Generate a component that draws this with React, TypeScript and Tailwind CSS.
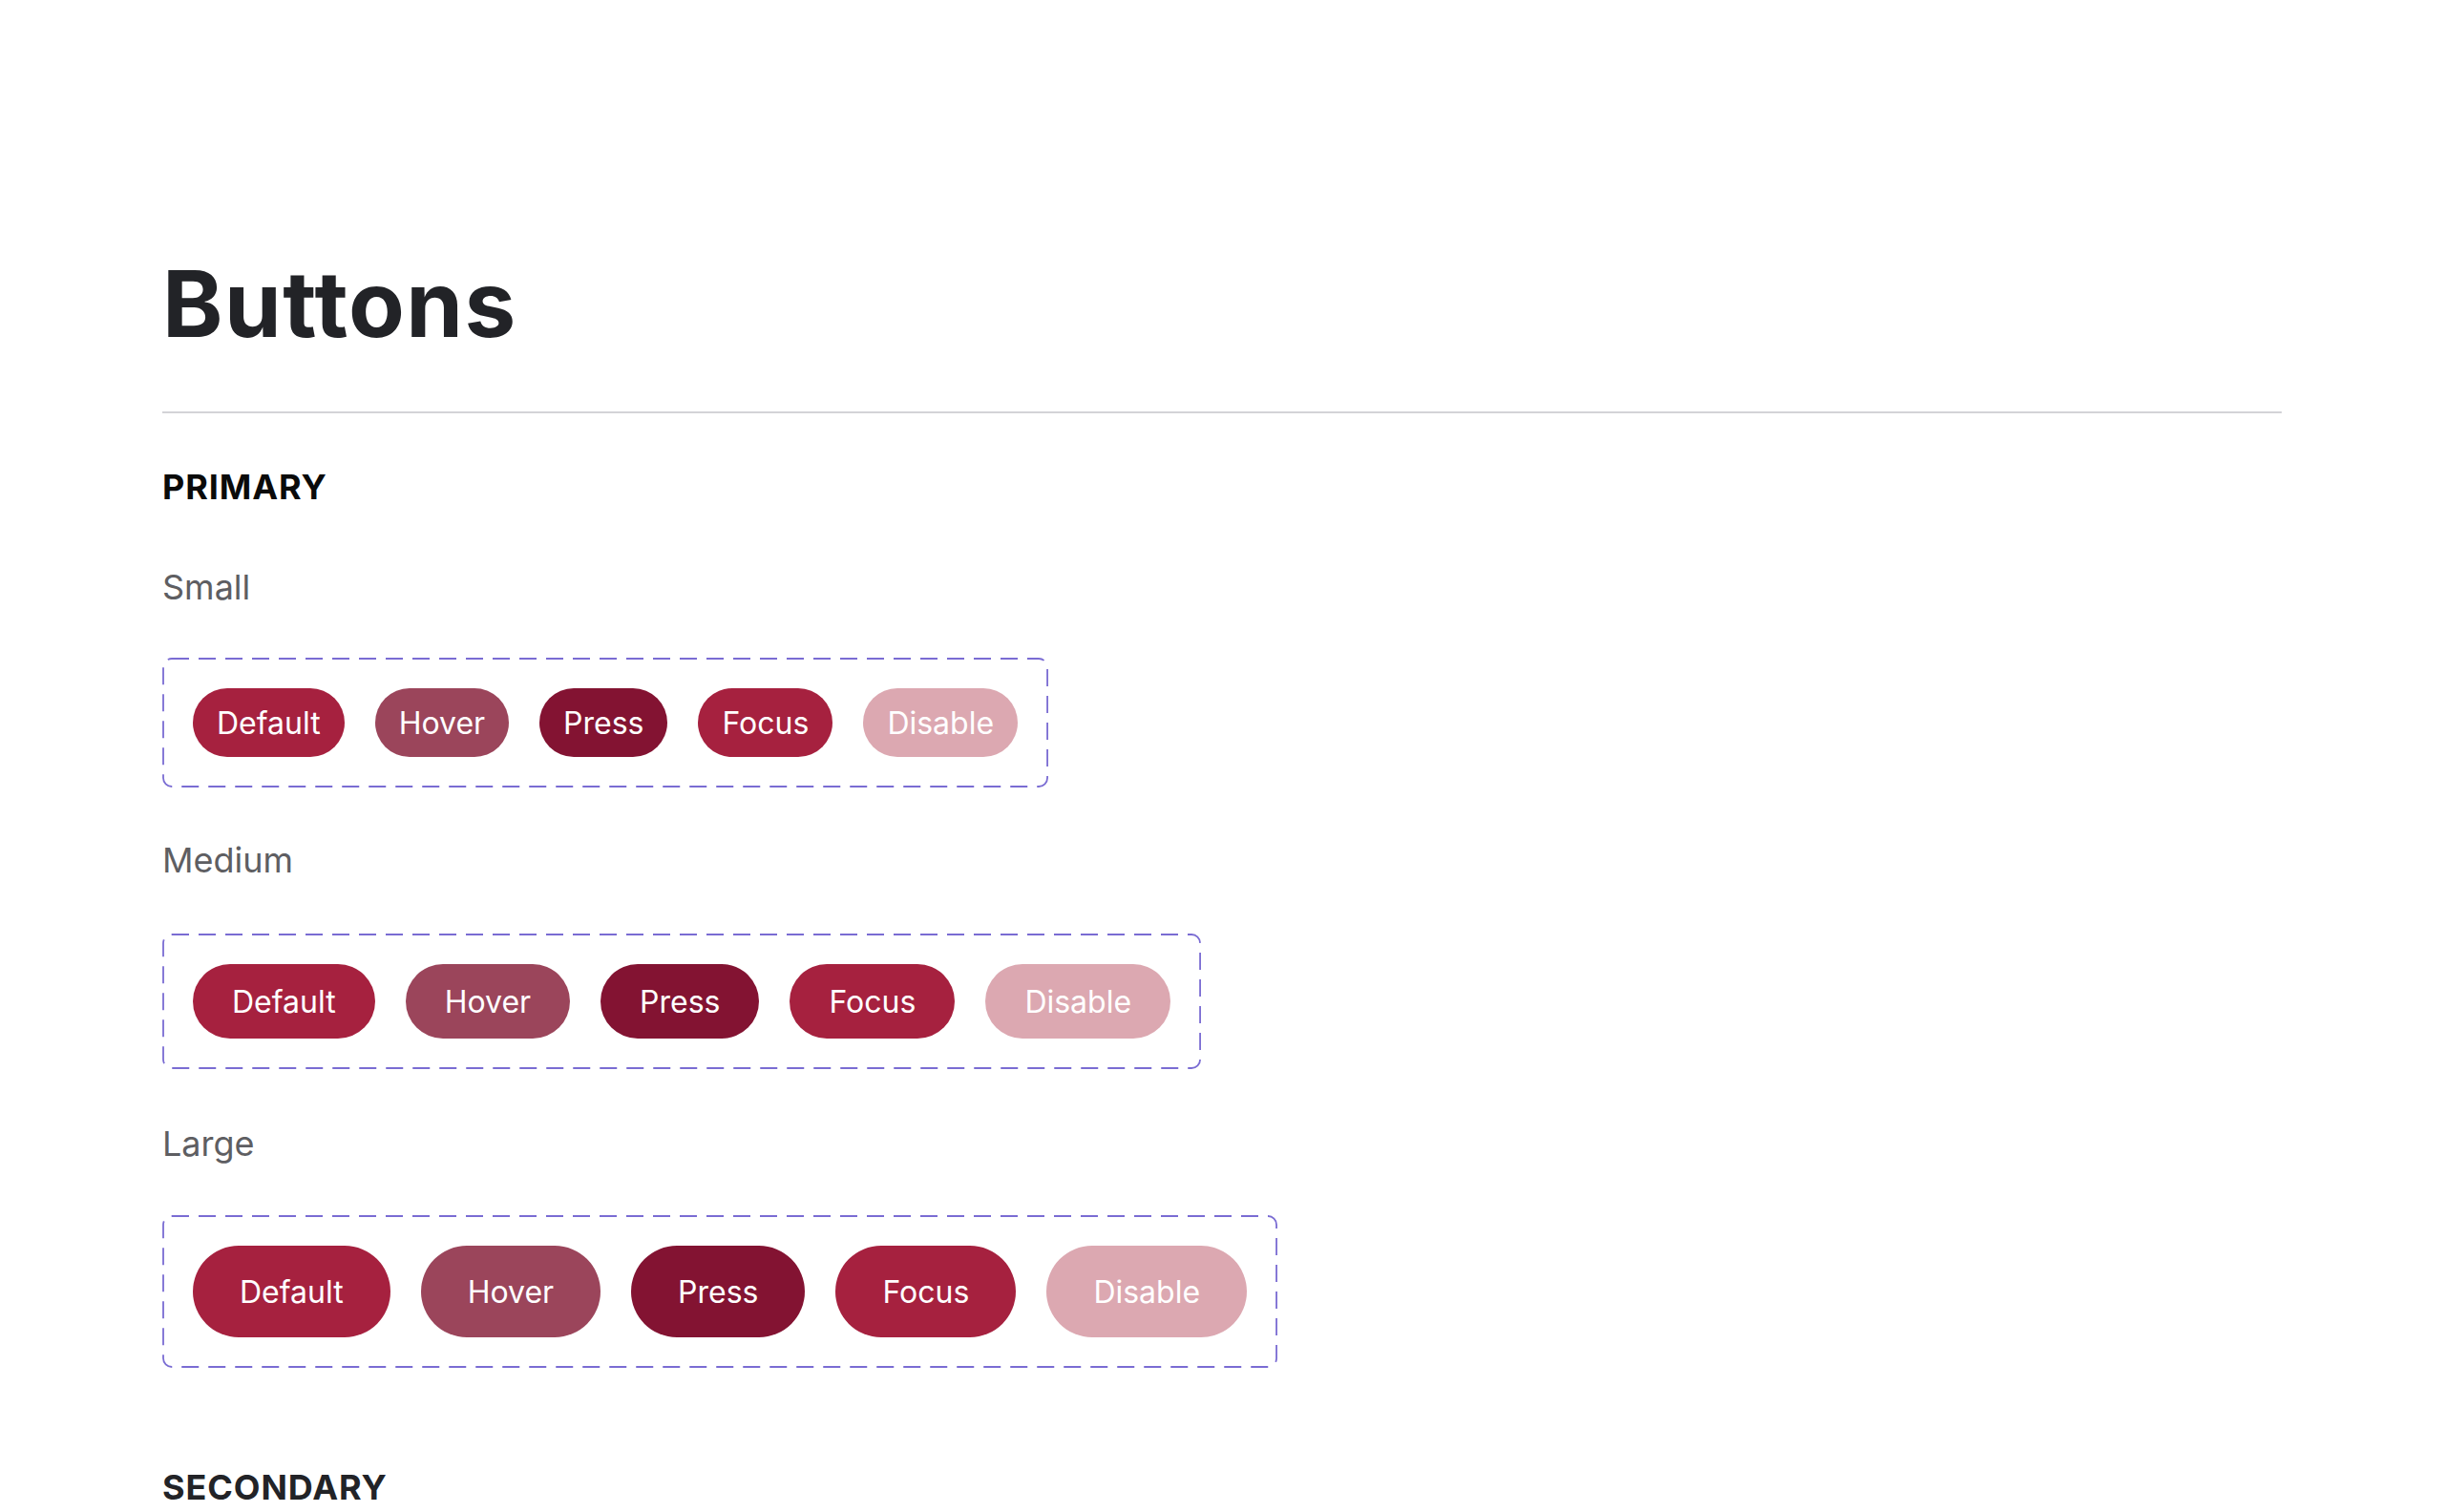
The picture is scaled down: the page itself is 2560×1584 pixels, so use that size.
import type { ReactNode } from "react";

type ButtonState = "Default" | "Hover" | "Press" | "Focus" | "Disable";
type ButtonSize = "small" | "medium" | "large";

const STATES: ButtonState[] = ["Default", "Hover", "Press", "Focus", "Disable"];

const stateClass: Record<ButtonState, string> = {
  Default: "bg-[#a6213f]",
  Hover: "bg-[#9b455b]",
  Press: "bg-[#831332]",
  Focus: "bg-[#a6213f]",
  Disable: "bg-[#dca8b1]",
};

const sizeClass: Record<ButtonSize, string> = {
  small: "h-[72px] px-[25px]",
  medium: "h-[78px] px-[41px]",
  large: "h-[96px] px-[49px]",
};

function StateButton({ state, size }: { state: ButtonState; size: ButtonSize }) {
  return (
    <button
      type="button"
      className={`${stateClass[state]} ${sizeClass[size]} inline-flex items-center justify-center rounded-full pt-[2px] text-[32px] leading-none font-normal text-white`}
    >
      {state}
    </button>
  );
}

// dashed frame like a component set in a design tool
function DashedFrame({ children }: { children: ReactNode }) {
  return (
    <div className="relative inline-flex items-center gap-[32px] p-[32px]">
      <svg className="pointer-events-none absolute inset-[1px] h-[calc(100%-2px)] w-[calc(100%-2px)] overflow-visible">
        <rect
          x="0"
          y="0"
          width="100%"
          height="100%"
          rx="9"
          ry="9"
          fill="none"
          stroke="#7a6cd3"
          strokeWidth="1.8"
          strokeDasharray="18 10"
        />
      </svg>
      {children}
    </div>
  );
}

function SizeGroup({
  label,
  size,
  labelTop,
  frameTop,
}: {
  label: string;
  size: ButtonSize;
  labelTop: string;
  frameTop: string;
}) {
  return (
    <div className="flex flex-col items-start">
      <div className={`${labelTop} text-[36px] leading-none text-[#5e5e62]`}>{label}</div>
      <div className={frameTop}>
        <DashedFrame>
          {STATES.map((state) => (
            <StateButton key={state} state={state} size={size} />
          ))}
        </DashedFrame>
      </div>
    </div>
  );
}

export default function App() {
  return (
    <div
      className="min-h-screen bg-white px-[170px] pt-[270px] pb-[120px]"
      style={{ fontFamily: "Inter, 'Noto Sans', sans-serif" }}
    >
      <h1 className="text-[96px] leading-none font-bold tracking-[0.015em] text-[#222327]">
        Buttons
      </h1>
      <div className="mt-[65px] h-[2px] w-full bg-[#d3d3d7]" />

      <section>
        <h2 className="mt-[59px] text-[36px] leading-none font-bold tracking-[0.025em] text-[#0a0a0a]">
          PRIMARY
        </h2>
        <SizeGroup label="Small" size="small" labelTop="mt-[69px]" frameTop="mt-[56px]" />
        <SizeGroup label="Medium" size="medium" labelTop="mt-[58px]" frameTop="mt-[59px]" />
        <SizeGroup label="Large" size="large" labelTop="mt-[60px]" frameTop="mt-[57px]" />
      </section>

      <section>
        <h2 className="mt-[107px] text-[36px] leading-none font-bold tracking-[0.025em] text-[#222327]">
          SECONDARY
        </h2>
      </section>
    </div>
  );
}
